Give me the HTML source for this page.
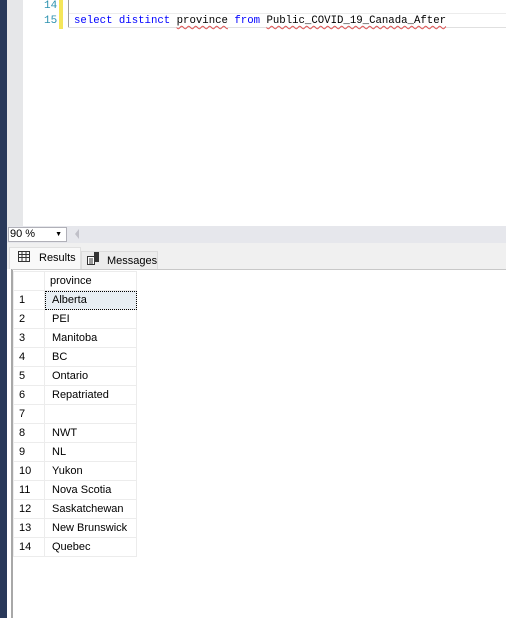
<!DOCTYPE html>
<html><head><style>
*{margin:0;padding:0;box-sizing:border-box}
body{width:506px;height:618px;position:relative;overflow:hidden;background:#fff;font-family:"Liberation Sans",sans-serif}
.abs{position:absolute}
.num{font-family:"Liberation Mono",monospace;font-size:11px;color:#2b91af}
.code{font-family:"Liberation Mono",monospace;font-size:10.7px;white-space:pre}
.kw{color:#0000ff}
.sq{text-decoration:underline wavy #e05050;text-decoration-thickness:1px;text-underline-offset:2px}
table{border-collapse:collapse;font-size:11px;color:#000}
td{height:19px;border:1px solid #ececec;padding:0 0 0 5px}
</style></head><body>
<div class="abs" style="left:0;top:0;width:7px;height:618px;background:#29395a"></div>
<div class="abs" style="left:7px;top:0;width:16px;height:226px;background:#e6e7e9"></div>
<div class="abs num" style="left:44px;top:0px">14</div>
<div class="abs num" style="left:44px;top:15px">15</div>
<div class="abs" style="left:59px;top:0;width:4px;height:29px;background:#f5e65a"></div>
<div class="abs" style="left:68px;top:0;width:1px;height:28px;background:#a0a0a0"></div>
<div class="abs" style="left:68px;top:27px;width:438px;height:1px;background:#e0e0e0"></div>
<div class="abs" style="left:69px;top:13px;width:437px;height:1px;background:#ececec"></div>
<div class="abs code" style="left:74px;top:15px"><span class="kw">select distinct</span> <span class="sq">province</span> <span class="kw">from</span> <span class="sq">Public_COVID_19_Canada_After</span></div>
<div class="abs" style="left:7px;top:226px;width:499px;height:17px;background:#e6e7ec"></div>
<div class="abs" style="left:8px;top:227px;width:59px;height:15px;background:#fff;border:1px solid #b0b0b8;font-size:11px;padding-left:1px;line-height:13px">90 %<span style="position:absolute;right:4px;top:0;font-size:7px">▼</span></div>
<div class="abs" style="left:75px;top:229px;width:0;height:0;border-top:5px solid transparent;border-bottom:5px solid transparent;border-right:4px solid #c0c0c8"></div>
<div class="abs" style="left:7px;top:243px;width:499px;height:26px;background:#f0f0f0"></div>
<div class="abs" style="left:9px;top:247px;width:72px;height:22px;background:#f9f9f9;border:1px solid #e0e0e0;border-bottom:none;font-size:11px;padding:4px 0 0 29px">Results</div>
<svg class="abs" style="left:18px;top:251px" width="12" height="11"><rect x=".5" y=".5" width="11" height="10" fill="none" stroke="#333"/><path d="M0 3.5H12M0 6.5H12M4 1V11M8 1V11" stroke="#333"/></svg>
<div class="abs" style="left:81px;top:251px;width:77px;height:18px;background:#ececec;border:1px solid #dcdcdc;border-bottom:none;font-size:11px;padding:3px 0 0 25px">Messages</div>
<svg class="abs" style="left:86px;top:252px" width="14" height="13"><rect x="1.5" y="4.5" width="7" height="8" fill="#fff" stroke="#333"/><path d="M3 7H7M3 9H7M3 11H7" stroke="#333"/><rect x="8" y="0" width="5" height="10" fill="#333"/></svg>
<div class="abs" style="left:7px;top:269px;width:5px;height:349px;background:#fff"></div>
<div class="abs" style="left:11px;top:269px;width:2px;height:349px;background:#a8a8a8"></div>
<div class="abs" style="left:12px;top:269px;width:494px;height:1px;background:#c8c8c8"></div>
<table class="abs" style="left:13px;top:271px">
<tr><td style="width:31px"></td><td style="width:92px">province</td></tr>
<tr><td>1</td><td style="background:#e8eef3;outline:1px dotted #000;outline-offset:-1px;padding-left:7px">Alberta</td></tr>
<tr><td>2</td><td style="padding-left:7px">PEI</td></tr>
<tr><td>3</td><td style="padding-left:7px">Manitoba</td></tr>
<tr><td>4</td><td style="padding-left:7px">BC</td></tr>
<tr><td>5</td><td style="padding-left:7px">Ontario</td></tr>
<tr><td>6</td><td style="padding-left:7px">Repatriated</td></tr>
<tr><td>7</td><td></td></tr>
<tr><td>8</td><td style="padding-left:7px">NWT</td></tr>
<tr><td>9</td><td style="padding-left:7px">NL</td></tr>
<tr><td>10</td><td style="padding-left:7px">Yukon</td></tr>
<tr><td>11</td><td style="padding-left:7px">Nova Scotia</td></tr>
<tr><td>12</td><td style="padding-left:7px">Saskatchewan</td></tr>
<tr><td>13</td><td style="padding-left:7px">New Brunswick</td></tr>
<tr><td>14</td><td style="padding-left:7px">Quebec</td></tr>
</table>
</body></html>
